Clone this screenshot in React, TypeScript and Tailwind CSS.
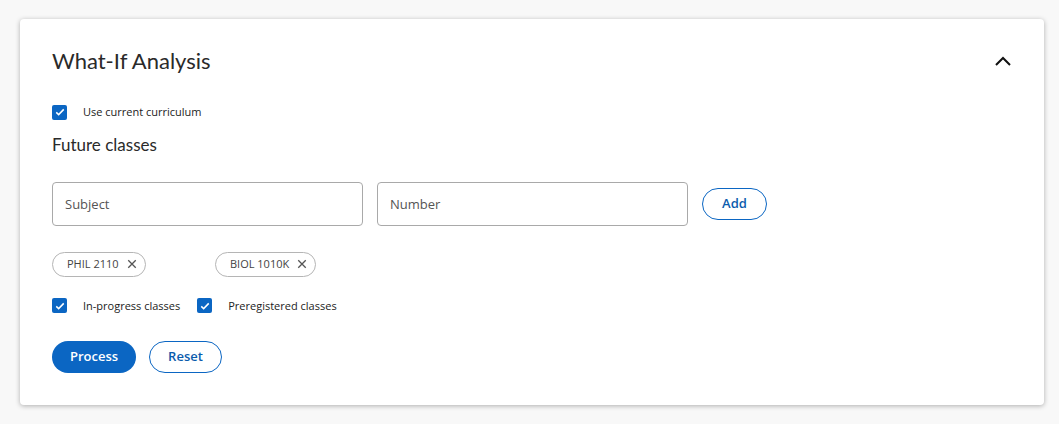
import { FC } from 'react'

const Check: FC<{ label: string }> = ({ label }) => (
  <label className="flex items-center">
    <span className="flex h-[15px] w-[15px] items-center justify-center rounded-[2px] bg-[#0b66c3]">
      <svg viewBox="0 0 16 16" className="h-[12px] w-[12px]" fill="none" stroke="white" strokeWidth="2">
        <path d="M3 8.5l3.2 3L13 4.5" />
      </svg>
    </span>
    <span className="ml-[16px] text-[11px] text-[#222]">{label}</span>
  </label>
)

const Chip: FC<{ label: string }> = ({ label }) => (
  <div className="flex h-[25px] items-center rounded-full border border-[#b5b5b5] pl-[14px] pr-[8px] text-[11px] text-[#444]">
    <span>{label}</span>
    <svg viewBox="0 0 12 12" className="ml-[8px] h-[10px] w-[10px]" stroke="#555" strokeWidth="1.6">
      <path d="M1.5 1.5l9 9M10.5 1.5l-9 9" />
    </svg>
  </div>
)

export default function App() {
  return (
    <div className="min-h-screen bg-[#f8f8f8] pl-[20px] pr-[15px] pt-[19px] font-['Open_Sans',sans-serif]">
      <div className="h-[386px] w-[1024px] rounded-[4px] bg-white pl-[32px] pr-[32px] pt-[28px] shadow-[0_1px_5px_rgba(0,0,0,0.3)]">
        <div className="flex items-center justify-between">
          <h1 className="font-['Lato',sans-serif] text-[22px] leading-[28px] text-[#2a2a2a]">What-If Analysis</h1>
          <svg viewBox="0 0 20 20" className="mr-[-1px] h-[20px] w-[20px]" fill="none" stroke="#111" strokeWidth="2">
            <path d="M3 14l7-7 7 7" />
          </svg>
        </div>

        <div className="mt-[29px]">
          <Check label="Use current curriculum" />
        </div>

        <h2 className="mt-[12px] font-['Lato',sans-serif] text-[17px] leading-[24px] text-[#2a2a2a]">Future classes</h2>

        <div className="mt-[25px] flex items-center gap-[14px]">
          <input
            placeholder="Subject"
            className="h-[44px] w-[311px] rounded-[4px] border border-[#a9a9a9] px-[12px] text-[13px] placeholder:text-[#555]"
          />
          <input
            placeholder="Number"
            className="h-[44px] w-[311px] rounded-[4px] border border-[#a9a9a9] px-[12px] text-[13px] placeholder:text-[#555]"
          />
          <button className="h-[32px] w-[65px] rounded-full border border-[#0b66c3] text-[13px] font-semibold text-[#0b5cad]">Add</button>
        </div>

        <div className="mt-[26px] grid grid-cols-[163px_163px]">
          <div className="flex">
            <Chip label="PHIL 2110" />
          </div>
          <div className="flex">
            <Chip label="BIOL 1010K" />
          </div>
        </div>

        <div className="mt-[21px] flex items-center gap-[17px]">
          <Check label="In-progress classes" />
          <Check label="Preregistered classes" />
        </div>

        <div className="mt-[27px] flex items-center gap-[13px]">
          <button className="h-[32px] w-[84px] rounded-full bg-[#0b66c3] text-[13px] font-semibold text-white">Process</button>
          <button className="h-[32px] w-[73px] rounded-full border border-[#0b66c3] text-[13px] font-semibold text-[#0b5cad]">Reset</button>
        </div>
      </div>
    </div>
  )
}
